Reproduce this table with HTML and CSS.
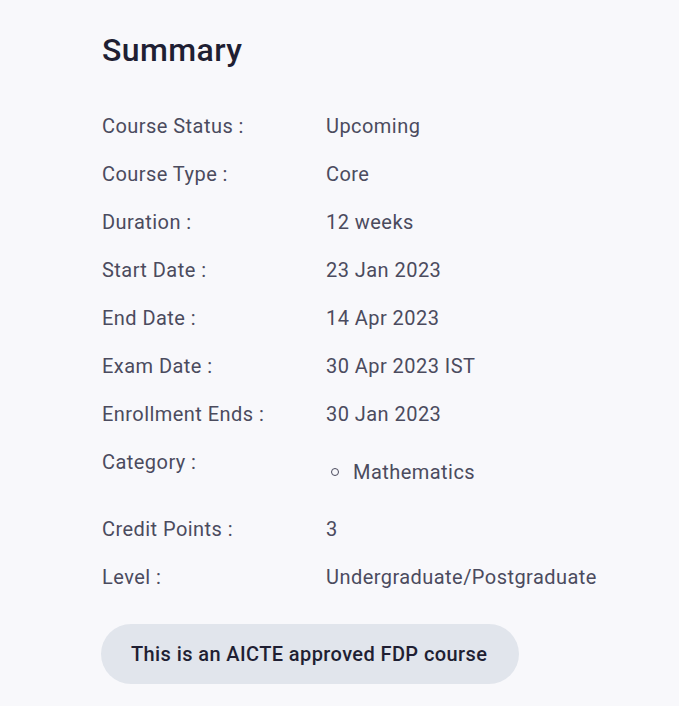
FILE: index.html
```html
<!DOCTYPE html>
<html lang="en">
  <head>
    <meta charset="utf-8">
    <title>Summary</title>
    <link rel="stylesheet" href="styles.css">
  </head>
  <body>
    <section class="summary">
      <h1 class="summary-title">Summary</h1>

      <div class="info-list">
        <div class="info-row">
          <span class="info-label">Course Status :</span>
          <span class="info-value">Upcoming</span>
        </div>
        <div class="info-row">
          <span class="info-label">Course Type :</span>
          <span class="info-value">Core</span>
        </div>
        <div class="info-row">
          <span class="info-label">Duration :</span>
          <span class="info-value">12 weeks</span>
        </div>
        <div class="info-row">
          <span class="info-label">Start Date :</span>
          <span class="info-value">23 Jan 2023</span>
        </div>
        <div class="info-row">
          <span class="info-label">End Date :</span>
          <span class="info-value">14 Apr 2023</span>
        </div>
        <div class="info-row">
          <span class="info-label">Exam Date :</span>
          <span class="info-value">30 Apr 2023 IST</span>
        </div>
        <div class="info-row">
          <span class="info-label">Enrollment Ends :</span>
          <span class="info-value">30 Jan 2023</span>
        </div>
        <div class="info-row">
          <span class="info-label">Category :</span>
          <ul class="category-list">
            <li>Mathematics</li>
          </ul>
        </div>
        <div class="info-row">
          <span class="info-label">Credit Points :</span>
          <span class="info-value">3</span>
        </div>
        <div class="info-row">
          <span class="info-label">Level :</span>
          <span class="info-value">Undergraduate/Postgraduate</span>
        </div>
      </div>

      <div class="approval-pill">This is an AICTE approved FDP course</div>
    </section>
  </body>
</html>
```

FILE: styles.css
```css
body {
  margin: 0;
  background: #f8f8fb;
  font-family: Roboto, "Liberation Sans", sans-serif;
  letter-spacing: 0.4px;
}

.summary {
  padding: 24px 0 0 102px;
}

.summary-title {
  margin: 0 0 26px;
  font-size: 32px;
  font-weight: 500;
  line-height: 52px;
  color: #1f1f33;
}

.info-row {
  display: grid;
  grid-template-columns: 224px auto;
  align-items: start;
  font-size: 20px;
  line-height: 48px;
  letter-spacing: 0.45px;
  color: #4b4b5e;
}

.category-list {
  list-style: none;
  margin: 10px 0 9px;
  padding: 0;
}

.category-list li {
  position: relative;
  padding-left: 27px;
}

.category-list li::before {
  content: "";
  position: absolute;
  left: 5px;
  top: 20px;
  width: 6px;
  height: 6px;
  border: 1px solid #4b4b5e;
  border-radius: 50%;
}

.approval-pill {
  display: inline-block;
  margin: 23px 0 0 -1px;
  padding: 0 32px 0 30px;
  line-height: 60px;
  border-radius: 30px;
  background: #e1e5ec;
  color: #1f1f33;
  font-size: 20px;
  font-weight: 500;
}
```
